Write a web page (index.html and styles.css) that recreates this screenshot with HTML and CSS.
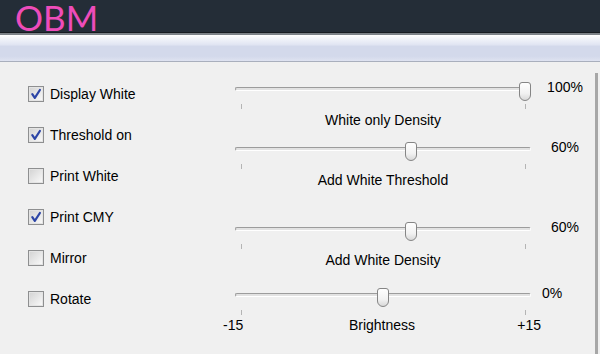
FILE: index.html
```html
<!DOCTYPE html>
<html lang="en">
<head>
  <meta charset="UTF-8">
  <meta name="viewport" content="width=device-width, initial-scale=1.0">
  <title>OBM</title>
  <link rel="stylesheet" href="styles.css">
</head>
<body>
  <header class="titlebar"><span class="logo">OBM</span></header>
  <div class="toolbar"></div>

  <main class="panel">
    <div class="frame">
      <ul class="options">
        <li class="option">
          <span class="check"><svg viewBox="0 0 14 14" width="14" height="14"><path d="M3.3 7.2 L5.8 10.8 L10.9 3" /></svg></span>
          Display White
        </li>
        <li class="option">
          <span class="check"><svg viewBox="0 0 14 14" width="14" height="14"><path d="M3.3 7.2 L5.8 10.8 L10.9 3" /></svg></span>
          Threshold on
        </li>
        <li class="option"><span class="check"></span>Print White</li>
        <li class="option">
          <span class="check"><svg viewBox="0 0 14 14" width="14" height="14"><path d="M3.3 7.2 L5.8 10.8 L10.9 3" /></svg></span>
          Print CMY
        </li>
        <li class="option"><span class="check"></span>Mirror</li>
        <li class="option"><span class="check"></span>Rotate</li>
      </ul>

      <div class="sliders">
        <div class="slider">
          <div class="slider-row">
            <div class="track">
              <div class="groove"></div>
              <div class="knob-area"><span class="thumb" style="left: 100%;"></span></div>
            </div>
            <span class="value">100%</span>
          </div>
          <div class="ticks"><i></i><i></i></div>
          <div class="caption">White only Density</div>
        </div>

        <div class="slider slider--threshold">
          <div class="slider-row">
            <div class="track">
              <div class="groove"></div>
              <div class="knob-area"><span class="thumb" style="left: 60%;"></span></div>
            </div>
            <span class="value">60%</span>
          </div>
          <div class="ticks"><i></i><i></i></div>
          <div class="caption">Add White Threshold</div>
        </div>

        <div class="slider slider--density">
          <div class="slider-row">
            <div class="track">
              <div class="groove"></div>
              <div class="knob-area"><span class="thumb" style="left: 60%;"></span></div>
            </div>
            <span class="value">60%</span>
          </div>
          <div class="ticks"><i></i><i></i></div>
          <div class="caption">Add White Density</div>
        </div>

        <div class="slider slider--brightness">
          <div class="slider-row">
            <div class="track">
              <div class="groove"></div>
              <div class="knob-area"><span class="thumb" style="left: 50%;"></span></div>
            </div>
            <span class="value value--left">0%</span>
          </div>
          <div class="ticks"><i></i><i></i></div>
          <div class="scale">
            <span class="scale-min">-15</span>
            <span>Brightness</span>
            <span class="scale-max">+15</span>
          </div>
        </div>
      </div>
    </div>
  </main>
</body>
</html>
```

FILE: styles.css
```css
body {
  margin: 0;
  height: 354px;
  overflow: hidden;
  display: flex;
  flex-direction: column;
  background-color: #f0f0f0;
  font-family: "Liberation Sans", Arial, sans-serif;
  font-size: 14px;
  color: #000;
}

/* dark title strip with logo */
.titlebar {
  height: 32px;
  background-color: #242d37;
  border-bottom: 1px solid #161b21;
}
.logo {
  display: block;
  padding: 2px 0 0 15px;
  font-family: Lato, "Liberation Sans", sans-serif;
  font-size: 35px;
  line-height: 30px;
  color: #ee4cba;
}

.toolbar {
  height: 26px;
  border-top: 2px solid #7c8288;
  border-bottom: 1px solid #a9afbd;
  background: linear-gradient(#ffffff 0%, #f3f5fa 12%, #e2e6f3 36%, #d3d9eb 44%, #d3d9eb 82%, #dfe3f1 100%);
}

.panel {
  flex: 1;
  display: flex;
  flex-direction: column;
}
.frame {
  flex: 1;
  display: flex;
  margin: 11px 2px 0 0;
  border-right: 3px solid #a7a7a7;
}

/* checkbox column */
.options {
  list-style: none;
  margin: 0;
  padding: 0 0 0 28px;
  width: 235px;
  box-sizing: border-box;
}
.option {
  height: 41px;
  display: flex;
  align-items: center;
  gap: 6px;
}
.check {
  width: 16px;
  height: 16px;
  box-sizing: border-box;
  border: 1px solid #8e8f90;
  box-shadow: inset 0 0 0 1px #e4e4e4;
  background: linear-gradient(135deg, #d2d2d2, #fbfbfb);
  display: flex;
  align-items: center;
  justify-content: center;
}
.check path {
  fill: none;
  stroke: #2c45a6;
  stroke-width: 2.2;
  stroke-linecap: round;
  stroke-linejoin: round;
}

/* slider column */
.sliders {
  padding-top: 6px;
}
.slider--threshold {
  margin-top: 11px;
}
.slider--density {
  margin-top: 31px;
}
.slider--brightness {
  margin-top: 17px;
}
.slider-row {
  display: flex;
  height: 20px;
}
.track {
  position: relative;
  width: 296px;
  height: 20px;
}
.groove {
  margin-top: 8px;
  height: 4px;
  box-sizing: border-box;
  border: 1px solid;
  border-color: #9c9c9c #ffffff #ffffff #9c9c9c;
  border-radius: 2px;
  background-color: #e2e2e2;
}
.knob-area {
  position: absolute;
  top: 0;
  left: 6px;
  right: 6px;
  height: 20px;
}
.thumb {
  position: absolute;
  top: 3px;
  width: 12px;
  height: 19px;
  margin-left: -6px;
  box-sizing: border-box;
  border: 1px solid #858585;
  border-radius: 3px 3px 6px 6px;
  background: linear-gradient(#fefefe, #f2f2f2 60%, #d9d9d9);
}
.value {
  margin-left: 13px;
  width: 42px;
  text-align: center;
  line-height: 16px;
}
.value--left {
  text-align: left;
  margin-left: 11px;
}
.ticks {
  display: flex;
  justify-content: space-between;
  width: 296px;
  height: 10px;
  box-sizing: border-box;
  padding: 5px 5px 0 6px;
}
.ticks i {
  width: 1px;
  height: 5px;
  background-color: #b4b4b4;
}
.caption {
  width: 296px;
  margin-top: 3px;
  text-align: center;
  line-height: 16px;
}
.scale {
  display: grid;
  grid-template-columns: 1fr auto 1fr;
  width: 318px;
  margin: 2px 0 0 -12px;
  line-height: 16px;
}
.scale-min {
  justify-self: start;
}
.scale-max {
  justify-self: end;
}
```
